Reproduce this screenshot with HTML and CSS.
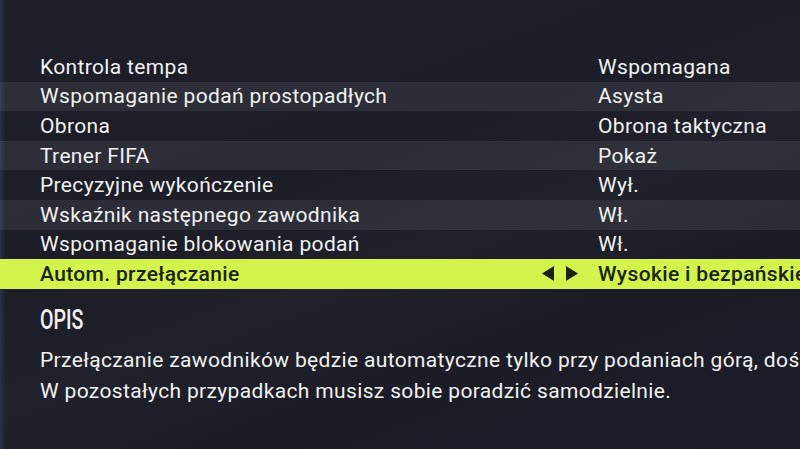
FILE: index.html
```html
<!DOCTYPE html>
<html lang="pl">
<head>
  <meta charset="UTF-8" />
  <meta name="viewport" content="width=device-width, initial-scale=1.0"/>
  <title>Ustawienia gry</title>
  <link rel="stylesheet" href="styles.css">
</head>
<body>
  <main class="settings">
    <ul class="options">
      <li class="option"><span class="label">Kontrola tempa</span><span class="value">Wspomagana</span></li>
      <li class="option"><span class="label">Wspomaganie podań prostopadłych</span><span class="value">Asysta</span></li>
      <li class="option"><span class="label">Obrona</span><span class="value">Obrona taktyczna</span></li>
      <li class="option"><span class="label">Trener FIFA</span><span class="value">Pokaż</span></li>
      <li class="option"><span class="label">Precyzyjne wykończenie</span><span class="value">Wył.</span></li>
      <li class="option"><span class="label">Wskaźnik następnego zawodnika</span><span class="value">Wł.</span></li>
      <li class="option"><span class="label">Wspomaganie blokowania podań</span><span class="value">Wł.</span></li>
      <li class="option active">
        <span class="label">Autom. przełączanie</span>
        <span class="arrows">
          <svg width="12" height="15" viewBox="0 0 12 15"><path d="M12 0 L0 7.5 L12 15 Z"/></svg>
          <svg width="12" height="15" viewBox="0 0 12 15"><path d="M0 0 L12 7.5 L0 15 Z"/></svg>
        </span>
        <span class="value">Wysokie i bezpańskie piłki</span>
      </li>
    </ul>

    <section class="description">
      <h3><span>OPIS</span></h3>
      <p>Przełączanie zawodników będzie automatyczne tylko przy podaniach górą, dośrodkowaniach i bezpańskich piłkach.</p>
      <p>W pozostałych przypadkach musisz sobie poradzić samodzielnie.</p>
    </section>
  </main>
</body>
</html>
```

FILE: styles.css
```css
html, body {
  margin: 0;
  height: 100%;
  overflow: hidden;
}
body {
  background:
    linear-gradient(90deg, rgba(60, 80, 140, 0.35) 0, rgba(60, 80, 140, 0) 6px),
    linear-gradient(160deg, #1d1e28 0%, #1c1d27 40%, #20212b 55%, #1b1c26 70%, #1c1d28 100%);
  color: #f1f1f1;
  font-family: Roboto, "Noto Sans", sans-serif;
  font-size: 21px;
  letter-spacing: 0.35px;
}
.settings {
  padding-top: 52px;
}
.options {
  list-style: none;
  margin: 0;
  padding: 0;
}
.option {
  display: grid;
  grid-template-columns: 501px 57px 1fr;
  align-items: center;
  height: 29.6px;
  padding-left: 40px;
  white-space: nowrap;
}
.option:nth-child(even) {
  background: rgba(255, 255, 255, 0.075);
}
.option .value {
  grid-column: 3;
}
.option.active {
  background: #d2f44c;
  color: #1b2312;
  font-weight: 500;
}
.arrows {
  display: flex;
  gap: 12px;
  padding-left: 1px;
}
.arrows svg {
  display: block;
  fill: #1b2312;
}
.description {
  padding: 16px 40px 0;
}
.description h3 {
  margin: 0 0 10px;
  font-size: 28px;
  font-weight: 500;
  line-height: 30px;
  letter-spacing: 0;
}
/* condensed heading face */
.description h3 span {
  display: inline-block;
  transform: scaleX(0.7);
  transform-origin: left center;
}
.description p {
  margin: 0;
  line-height: 31px;
  white-space: nowrap;
}
```
